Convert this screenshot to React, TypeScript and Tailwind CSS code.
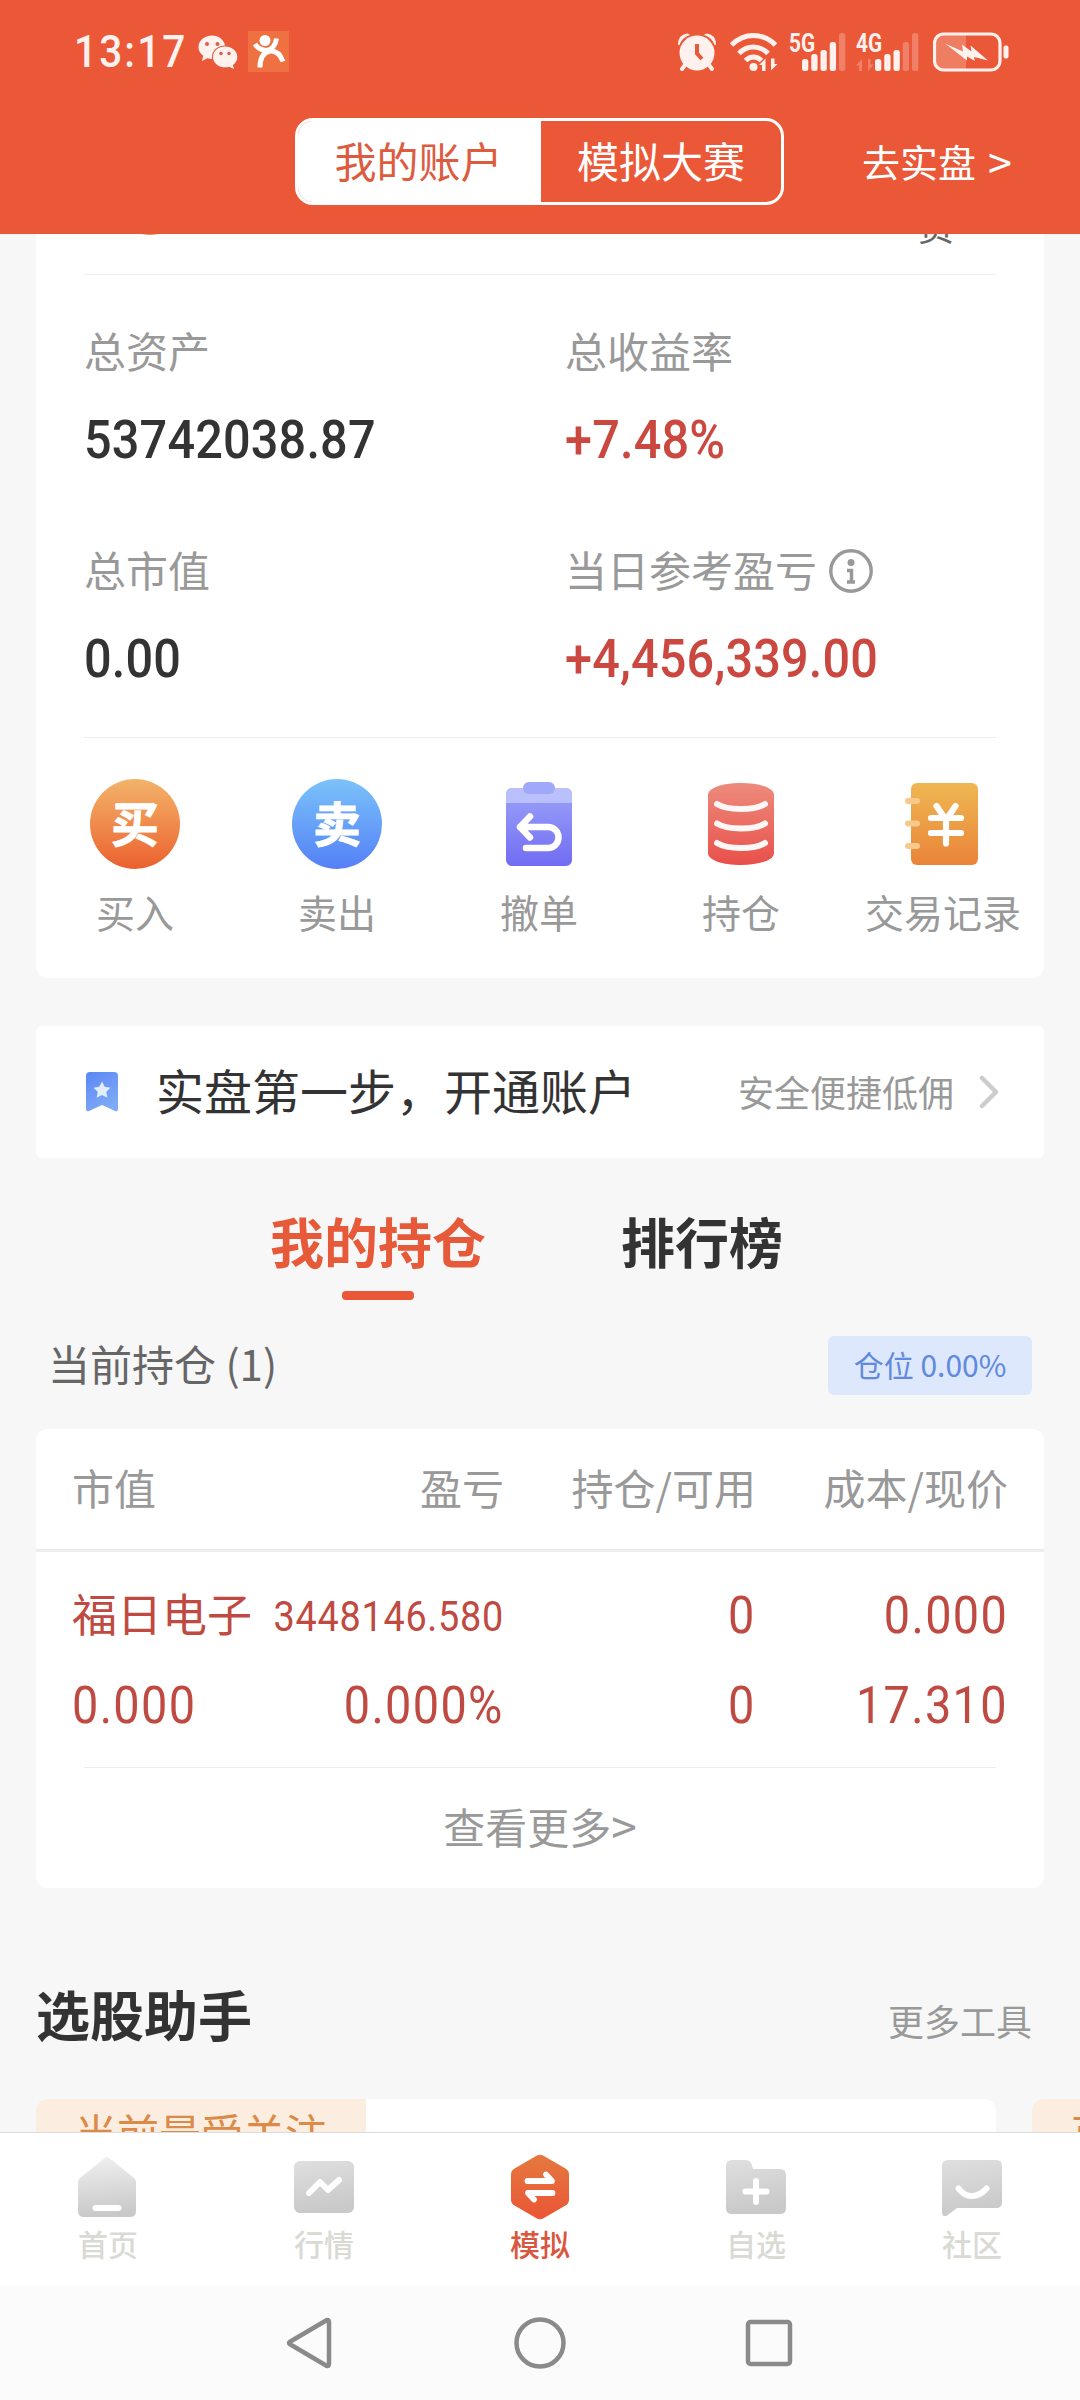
import type { ReactNode } from "react";
import clsx from "clsx";

const actions = [
  { label: "买入", icon: <RoundIcon char="买" className="bg-linear-to-b from-[#f2b36a] to-[#ea5f2d]" /> },
  { label: "卖出", icon: <RoundIcon char="卖" className="bg-linear-to-b from-[#7cc2f9] to-[#557ff6]" /> },
  { label: "撤单", icon: <CancelIcon /> },
  { label: "持仓", icon: <StackIcon /> },
  { label: "交易记录", icon: <RecordIcon /> },
];

const tabs = [
  { label: "首页", icon: <HomeIcon /> },
  { label: "行情", icon: <MarketIcon /> },
  { label: "模拟", icon: <SimulateIcon />, active: true },
  { label: "自选", icon: <WatchlistIcon /> },
  { label: "社区", icon: <CommunityIcon /> },
];

function RoundIcon({ char, className }: { char: string; className: string }) {
  return (
    <span
      className={clsx(
        "flex h-[90px] w-[90px] items-center justify-center rounded-full pb-[6px] text-[48px] leading-none font-bold text-white [-webkit-text-stroke:0.8px_white]",
        className
      )}
    >
      {char}
    </span>
  );
}

function CancelIcon() {
  return (
    <svg width="90" height="90" viewBox="0 0 90 90" fill="none">
      <defs>
        <linearGradient id="cancel" x1="0" y1="0" x2="0" y2="1">
          <stop offset="0" stopColor="#9ba3f8" />
          <stop offset="1" stopColor="#716cf3" />
        </linearGradient>
      </defs>
      <rect x="12" y="9" width="66" height="78" rx="6" fill="url(#cancel)" />
      <path d="M12 24V15a6 6 0 0 1 6-6h54a6 6 0 0 1 6 6v9z" fill="#b9c0fb" />
      <rect x="29" y="3" width="32" height="12" rx="6" fill="#a0a8f9" />
      <path
        d="M36 37.500 26 48l10 10.500M26 48h28a10.500 10.500 0 0 1 0 21H32"
        stroke="#fff"
        strokeWidth="6.500"
        strokeLinecap="round"
        strokeLinejoin="round"
      />
    </svg>
  );
}

function StackIcon() {
  return (
    <svg width="90" height="90" viewBox="0 0 90 90" fill="none">
      <defs>
        <linearGradient id="stack" x1="0" y1="0" x2="0" y2="1">
          <stop offset="0" stopColor="#ed8b7d" />
          <stop offset="1" stopColor="#e8504a" />
        </linearGradient>
      </defs>
      <path d="M12 16c0-7 14-12 33-12s33 5 33 12v58c0 7-14 12-33 12s-33-5-33-12z" fill="url(#stack)" />
      <path
        d="M21 25q8 5 24 5t24-5M21 44.500q8 5 24 5t24-5M21 64q8 5 24 5t24-5"
        stroke="#fff7f5"
        strokeWidth="6"
        strokeLinecap="round"
      />
    </svg>
  );
}

function RecordIcon() {
  return (
    <svg width="90" height="90" viewBox="0 0 90 90" fill="none">
      <defs>
        <linearGradient id="record" x1="0" y1="0" x2="0" y2="1">
          <stop offset="0" stopColor="#efb752" />
          <stop offset="1" stopColor="#ea8438" />
        </linearGradient>
      </defs>
      <rect x="13" y="4" width="67" height="82" rx="6" fill="url(#record)" />
      <g fill="#f6c98d">
        <rect x="7" y="19" width="15" height="6" rx="3" />
        <rect x="7" y="41.500" width="15" height="6" rx="3" />
        <rect x="7" y="64" width="15" height="6" rx="3" />
      </g>
      <path
        d="M38.500 27 48 41l9.500-14M33 39h30M33 54h30M48 41v23.500"
        stroke="#fff"
        strokeWidth="6.200"
        strokeLinecap="round"
        strokeLinejoin="round"
      />
    </svg>
  );
}

function GrayFill({ id }: { id: string }) {
  return (
    <defs>
      <linearGradient id={id} x1="0" y1="0" x2="0.200" y2="1">
        <stop offset="0" stopColor="#dfdfdf" />
        <stop offset="1" stopColor="#c9c9c9" />
      </linearGradient>
    </defs>
  );
}

function HomeIcon() {
  return (
    <svg width="66" height="66" viewBox="0 0 66 66" fill="none">
      <defs>
        <linearGradient id="home" x1="0" y1="0" x2="0.100" y2="1">
          <stop offset="0" stopColor="#f0f0f0" />
          <stop offset="1" stopColor="#c9c9c9" />
        </linearGradient>
      </defs>
      <path
        d="M29 4.500q3-2.500 6 0L59 24q2 1.800 2 4v29q0 6-6 6H9q-6 0-6-6V28q0-2.200 2-4z"
        fill="url(#home)"
      />
      <path d="M20.500 54h23" stroke="#fff" strokeWidth="6" strokeLinecap="round" />
    </svg>
  );
}

function MarketIcon() {
  return (
    <svg width="66" height="66" viewBox="0 0 66 66" fill="none">
      <GrayFill id="market" />
      <rect x="3" y="7" width="60" height="52" rx="6" fill="url(#market)" />
      <path
        d="M18 39 29 28l8 8L48 26"
        stroke="#fff"
        strokeWidth="6"
        strokeLinecap="round"
        strokeLinejoin="round"
      />
    </svg>
  );
}

function SimulateIcon() {
  return (
    <svg width="66" height="66" viewBox="0 0 66 66" fill="none">
      <defs>
        <linearGradient id="simulate" x1="0" y1="0" x2="0" y2="1">
          <stop offset="0" stopColor="#e5793f" />
          <stop offset="1" stopColor="#ea5535" />
        </linearGradient>
      </defs>
      <path
        d="M29.500 1.800q3.500-2 7 0l22 12.700q3.500 2 3.500 6v25q0 4-3.500 6l-22 12.700q-3.500 2-7 0l-22-12.700Q4 49.500 4 45.500v-25q0-4 3.500-6z"
        fill="url(#simulate)"
      />
      <path
        d="M20.500 27H45l-6-6.500M45.500 39H21l6 6.500"
        stroke="#fff"
        strokeWidth="5.800"
        strokeLinecap="round"
        strokeLinejoin="round"
      />
    </svg>
  );
}

function WatchlistIcon() {
  return (
    <svg width="66" height="66" viewBox="0 0 66 66" fill="none">
      <GrayFill id="watchlist" />
      <path
        d="M3 12q0-6 6-6h13q5 0 6.500 4l1.500 5h27q6 0 6 6v33q0 6-6 6H9q-6 0-6-6z"
        fill="url(#watchlist)"
      />
      <path d="M22.500 37.500h21M33 27v21" stroke="#fff" strokeWidth="6" strokeLinecap="round" />
    </svg>
  );
}

function CommunityIcon() {
  return (
    <svg width="66" height="66" viewBox="0 0 66 66" fill="none">
      <GrayFill id="community" />
      <path
        d="M3 12q0-6 6-6h48q6 0 6 6v36q0 6-6 6H18L8 61.500q-5 2-5-3z"
        fill="url(#community)"
      />
      <path d="M19.500 34.500Q25 42 33 42t14.500-7.500" stroke="#fff" strokeWidth="6" strokeLinecap="round" />
    </svg>
  );
}

function SignalBars({ full }: { full: number }) {
  const tops = [26, 21, 17, 9, 0];
  return (
    <svg width="44" height="38" viewBox="0 0 44 38" fill="#fff2ee">
      {tops.map((top, i) => (
        <rect
          key={top}
          x={i * 9.250}
          y={top}
          width="6.300"
          height={38 - top}
          rx="2.500"
          opacity={i < full ? 1 : 0.260}
        />
      ))}
    </svg>
  );
}

function StatusBar() {
  return (
    <div className="flex h-[103px] items-center justify-between pr-[71px] pl-[74px] text-[#fff2ee]">
      <div className="flex items-center">
        <span className="w-[124px] origin-left scale-x-90 font-[Roboto] text-[45px] leading-none font-medium tracking-[2.4px]">
          13:17
        </span>
        <svg width="40" height="34" viewBox="0 0 40 34" fill="#fff2ee">
          <path d="M14 .5C6.500.5.500 5.500.500 12c0 3.600 1.800 6.600 4.700 8.700L4 26l5.300-2.700c1.600.5 3 .6 4.800.6C13 16 19 10.500 27 10.500 26 4.500 20.500.500 14 .500z" />
          <path d="M27 11.500c-6.800 0-12 4.600-12 10.400s5.200 10.400 12 10.400c1.600 0 3-.2 4.300-.6l4.700 2.300-1.100-4c2.700-1.900 4.400-4.800 4.400-8.100 0-5.800-5.500-10.400-12.300-10.400z" />
          <g fill="#d9604a">
            <circle cx="9" cy="9" r="2" />
            <circle cx="19.500" cy="9" r="2" />
            <circle cx="23" cy="18.500" r="1.800" />
            <circle cx="31" cy="18.500" r="1.800" />
          </g>
        </svg>
        <svg className="ml-[10px]" width="41" height="41" viewBox="0 0 41 41" fill="none">
          <path d="M0 0h41v41H0z" fill="#ef7040" />
          <circle cx="17" cy="9.500" r="5.500" fill="#fff" />
          <path
            d="M7 13q3.500 6 12 6.500 8-2 9.500-12M35 30.500q-4-11-13-10.500-10 2-10 16.500"
            stroke="#fff"
            strokeWidth="5"
          />
        </svg>
      </div>
      <div className="flex items-center">
        <svg width="38" height="38" viewBox="0 0 38 38" fill="#fff2ee">
          <circle cx="19" cy="20" r="17.500" />
          <path d="M0 11Q0 2 9 .500q2 0 3 1.500Q4 4.500 1.500 12 0 12.500 0 11zM38 11Q38 2 29 .500q-2 0-3 1.500 8 2.500 10.500 10 1.500.5 1.500-1z" />
          <path d="m7 32-3 4M31 32l3 4" stroke="#fff2ee" strokeWidth="4" strokeLinecap="round" />
          <path d="M19 11v9.500l5 5.500" fill="none" stroke="#eb5838" strokeWidth="4" />
        </svg>
        <svg className="ml-[14px]" width="48" height="38" viewBox="0 0 48 38" fill="none">
          <path
            d="M1.500 12Q11 2.500 23.500 2.500T45.500 12M9 20.500Q15 14 23.500 14T38 20.500M15.500 27.500q3.500-3.500 8-3.500t8 3.500"
            stroke="#fff2ee"
            strokeWidth="5"
          />
          <circle cx="23.500" cy="34" r="4" fill="#fff2ee" />
          <path d="M29 32l6.500-6.500V38H32v-6zM47.500 31 41 37.500V25.500h3.500V31z" fill="#fff2ee" />
        </svg>
        <div className="relative ml-[24px] h-[38px] w-[44px]">
          <SignalBars full={4} />
          <span className="absolute top-0 -left-[13px] origin-left scale-x-80 font-[Roboto] text-[26px] leading-[20px] font-bold">
            5G
          </span>
        </div>
        <div className="relative ml-[29px] h-[38px] w-[44px]">
          <SignalBars full={3} />
          <svg className="absolute top-[26px] -left-[19px]" width="18" height="12" viewBox="0 0 18 12">
            <path d="M0 6.500 6 0v12H3V6.500zM18 5.500 12 12V0h2.500v5.500z" fill="#fff2ee" opacity="0.26" />
          </svg>
          <span className="absolute top-0 -left-[19px] origin-left scale-x-80 font-[Roboto] text-[26px] leading-[20px] font-bold">
            4G
          </span>
        </div>
        <svg className="ml-[14px]" width="76" height="40" viewBox="0 0 76 40" fill="none">
          <path d="M11 2h22v36H11q-9 0-9-9V11q0-9 9-9z" fill="#ef7d62" />
          <rect x="1.500" y="2" width="65.500" height="36" rx="9" stroke="#fff2ee" strokeWidth="3.200" />
          <rect x="70.500" y="13.500" width="5" height="13" rx="2" fill="#fff2ee" />
          <path d="m12 11.500 18 8-1-7 9.500 7-1-6L55 28.500l-14-3.500 1 4-8-4.500 0 4z" fill="#fff2ee" />
        </svg>
      </div>
    </div>
  );
}

function Stat({
  label,
  value,
  up,
  children,
}: {
  label: string;
  value: string;
  up?: boolean;
  children?: ReactNode;
}) {
  return (
    <div className="h-[219px]">
      <div className="flex h-[60px] items-center gap-[12px] text-[42px] text-[#999]">
        {label}
        {children}
      </div>
      <div
        className={clsx(
          "mt-[31px] origin-left scale-x-90 font-[Roboto] text-[54px] leading-[60px] font-medium tracking-[0.2px] whitespace-nowrap",
          up ? "text-[#ca4840]" : "text-[#333]"
        )}
      >
        {value}
      </div>
    </div>
  );
}

function InfoIcon() {
  return (
    <svg className="mt-[6px]" width="44" height="44" viewBox="0 0 44 44" fill="none">
      <circle cx="22" cy="22" r="20.200" stroke="#999" strokeWidth="3.400" />
      <circle cx="22" cy="13.500" r="3.500" fill="#999" />
      <path d="M18 21.500h4.500V33M18 33h8" stroke="#999" strokeWidth="3.500" />
    </svg>
  );
}

function AccountCard() {
  return (
    <section className="h-[744px] rounded-b-[12px] bg-white">
      <div className="relative mx-[48px] h-[41px] overflow-hidden border-b border-[#eee]">
        <span className="absolute -top-[65px] left-[33px] h-[66px] w-[66px] rounded-full bg-[#e8953c]" />
        <span className="absolute -top-[29px] left-[834px] text-[36px] leading-[40px] text-[#666]">资</span>
      </div>
      <div className="mx-[48px] grid h-[463px] grid-cols-[481px_1fr] border-b border-[#eee] pt-[44px]">
        <Stat label="总资产" value="53742038.87" />
        <Stat label="总收益率" value="+7.48%" up />
        <Stat label="总市值" value="0.00" />
        <Stat label="当日参考盈亏" value="+4,456,339.00" up>
          <InfoIcon />
        </Stat>
      </div>
      <div className="-ml-[2px] grid grid-cols-5 pt-[41px]">
        {actions.map((a) => (
          <div key={a.label} className="flex flex-col items-center">
            {a.icon}
            <span className="mt-[13px] text-[39px] leading-[58px] whitespace-nowrap text-[#999]">{a.label}</span>
          </div>
        ))}
      </div>
    </section>
  );
}

function OpenAccountBanner() {
  return (
    <section className="mt-[48px] flex h-[132px] items-center rounded-[6px] bg-white pr-[45px] pl-[50px]">
      <svg width="32" height="40" viewBox="0 0 32 40">
        <defs>
          <linearGradient id="ribbon" x1="0" y1="0" x2="0.500" y2="1">
            <stop offset="0" stopColor="#5a86f4" />
            <stop offset="1" stopColor="#7eaaf7" />
          </linearGradient>
        </defs>
        <path d="M0 4q0-4 4-4h24q4 0 4 4v33q0 3-3 2L16 33 3 39q-3 1-3-2z" fill="url(#ribbon)" />
        <path
          d="m16 9.500 2.700 5.300 5.800.9-4.200 4.100 1 5.900-5.300-2.700-5.300 2.700 1-5.900-4.200-4.100 5.800-.9z"
          fill="#e2edfd"
        />
      </svg>
      <span className="ml-[38px] pb-[6px] text-[48px] leading-none text-[#333]">实盘第一步，开通账户</span>
      <span className="ml-auto pb-[2px] text-[36px] leading-none text-[#999]">安全便捷低佣</span>
      <svg className="ml-[25px]" width="20" height="34" viewBox="0 0 20 34" fill="none">
        <path d="m3 3 14 14L3 31" stroke="#ccc" strokeWidth="4.500" strokeLinecap="round" strokeLinejoin="round" />
      </svg>
    </section>
  );
}

function Num({ children, small, left }: { children: ReactNode; small?: boolean; left?: boolean }) {
  return (
    <span
      className={clsx(
        "scale-x-90 font-[Roboto] whitespace-nowrap",
        left ? "origin-left justify-self-start" : "origin-right justify-self-end",
        small ? "text-[42px] tracking-[0.8px]" : "text-[52px] tracking-[1.5px]"
      )}
    >
      {children}
    </span>
  );
}

function HoldingsTable() {
  const cols = "grid grid-cols-[181px_251px_252px_252px] pl-[36px]";
  return (
    <section className="mt-[34px] h-[459px] rounded-[12px] bg-white">
      <div className={clsx(cols, "h-[123px] items-center border-b-[3px] border-[#ededed] pb-[6px] text-right text-[42px] text-[#999]")}>
        <span className="text-left">市值</span>
        <span>盈亏</span>
        <span>持仓/可用</span>
        <span>成本/现价</span>
      </div>
      <div className={clsx(cols, "h-[215px] auto-rows-[90px] items-center pt-[19px] text-[#bf4a42]")}>
        <span className="pb-[7px] text-[45px] leading-none whitespace-nowrap">福日电子</span>
        <Num small>3448146.580</Num>
        <Num>0</Num>
        <Num>0.000</Num>
        <Num left>0.000</Num>
        <Num>0.000%</Num>
        <Num>0</Num>
        <Num>17.310</Num>
      </div>
      <div className="mx-[48px] flex h-[121px] items-center justify-center border-t border-[#eee] pb-[5px] text-[42px] text-[#999]">
        查看更多<span className="text-[46px]">&gt;</span>
      </div>
    </section>
  );
}

function Tools() {
  return (
    <section className="mt-[91px]">
      <div className="flex h-[72px] items-center justify-between pr-[12px]">
        <h2 className="pb-[3px] text-[54px] leading-none font-bold text-[#333]">选股助手</h2>
        <span className="pt-[10px] text-[36px] leading-none text-[#999]">更多工具</span>
      </div>
      <div className="mt-[48px] flex w-[1100px] gap-[36px] text-[42px] leading-[60px] text-[#dc8a48]">
        <div className="h-[120px] w-[960px] shrink-0 overflow-hidden rounded-[12px] bg-white">
          <div className="h-full w-[330px] bg-[#fbede0] px-[39px] pt-[3px] whitespace-nowrap">当前最受关注</div>
        </div>
        <div className="h-[120px] w-[330px] shrink-0 rounded-[12px] bg-[#fbede0] px-[39px] pt-[3px]">百</div>
      </div>
    </section>
  );
}

export default function App() {
  return (
    <div className="flex h-[2400px] w-[1080px] flex-col overflow-hidden bg-[#f7f7f7] font-['Noto_Sans_CJK_SC',sans-serif]">
      {/* Header */}
      <header className="h-[234px] shrink-0 bg-[#eb5838]">
        <StatusBar />
        <div className="flex pt-[15px]">
          <div className="ml-[295px] flex h-[87px] w-[489px] overflow-hidden rounded-[18px] border-[3px] border-white text-[42px] leading-none">
            <span className="flex w-[243px] items-center justify-center bg-white pr-[2px] pb-[3px] text-[#dd5c3f]">我的账户</span>
            <span className="flex flex-1 items-center justify-center pb-[3px] text-white">模拟大赛</span>
          </div>
          <span className="ml-[78px] flex items-center pb-[2px] text-[38px] leading-none text-white">
            去实盘<span className="ml-[12px] text-[43px]">&gt;</span>
          </span>
        </div>
      </header>

      {/* Content */}
      <main className="h-[1898px] shrink-0 overflow-hidden px-[36px]">
        <AccountCard />
        <OpenAccountBanner />

        <div className="mt-[41px] flex h-[101px] gap-[135px] pl-[234px] text-[54px] leading-[84px] font-bold">
          <div className="flex flex-col items-center text-[#e65a3a]">
            我的持仓
            <span className="mt-[8px] h-[9px] w-[72px] shrink-0 rounded-[4px] bg-[#eb5838]" />
          </div>
          <div className="text-[#333]">排行榜</div>
        </div>

        <div className="mt-[36px] flex h-[59px] items-center justify-between pr-[12px] pl-[12px]">
          <span className="pb-[6px] text-[42px] text-[#666]">当前持仓 (1)</span>
          <span className="flex h-[59px] w-[204px] items-center justify-center rounded-[6px] bg-[#dde8fc] pb-[2px] text-[30px] text-[#6089df]">
            仓位 0.00%
          </span>
        </div>

        <HoldingsTable />
        <Tools />
      </main>

      {/* Tab bar */}
      <nav className="grid h-[154px] shrink-0 grid-cols-5 border-t border-[#ddd] bg-white pt-[21px]">
        {tabs.map((t) => (
          <div key={t.label} className="flex flex-col items-center">
            {t.icon}
            <span
              className={clsx(
                "mt-[3px] text-[30px] leading-[40px] font-medium",
                t.active ? "text-[#d9563f]" : "text-[#dadad4]"
              )}
            >
              {t.label}
            </span>
          </div>
        ))}
      </nav>

      {/* Android navigation */}
      <div className="flex h-[114px] shrink-0 items-center justify-center gap-[176px] bg-[#fbfbfb]">
        <svg width="54" height="54" viewBox="0 0 54 54" fill="none" stroke="#8a8a8a" strokeWidth="4.500" strokeLinejoin="round">
          <path d="M7 25.800 43.500 4.200q2.500-1 2.500 2v41.600q0 3-2.500 2L7 28.200q-2-1.200 0-2.400z" />
        </svg>
        <svg width="54" height="54" viewBox="0 0 54 54" fill="none" stroke="#8a8a8a" strokeWidth="4.500">
          <circle cx="27" cy="27" r="23.500" />
        </svg>
        <svg width="54" height="54" viewBox="0 0 54 54" fill="none" stroke="#8a8a8a" strokeWidth="4.500">
          <rect x="5" y="6" width="42" height="42" rx="2.500" />
        </svg>
      </div>
    </div>
  );
}
